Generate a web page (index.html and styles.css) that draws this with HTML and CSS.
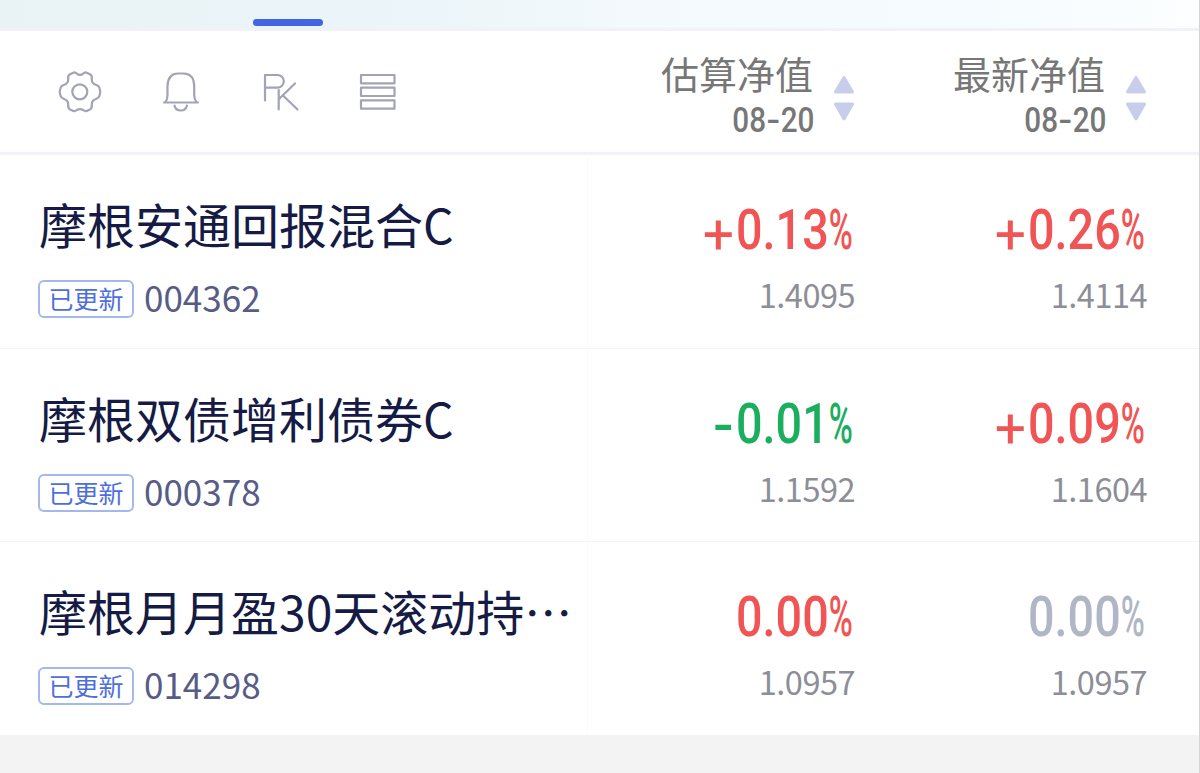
FILE: index.html
```html
<!DOCTYPE html>
<html lang="zh-CN">
<head>
<meta charset="utf-8">
<title>基金自选</title>
<link rel="stylesheet" href="styles.css">
</head>
<body>
<div class="page">
  <div class="tabs"><span class="tab-line"></span></div>
  <header class="head">
    <nav class="tools">
      <svg class="icon" width="46" height="46" viewBox="0 0 46 46"><path d="M16.8 3.5 Q18.6 3.200 19.8 4.6 Q23 7.2 26.2 4.6 Q27.4 3.200 29.2 3.5 L33 5.3 Q35.2 6.4 34.8 9.6 Q34.3 14.8 39.4 16 Q42 16.7 42.6 19.3 Q44 23 42.6 26.4 Q42 28.9 39.4 29.8 Q34.3 31.4 34.8 36.4 Q35 39.4 33 40.4 L29.6 42 Q27.8 42.5 26.2 41 Q23 39.2 19.8 41 Q18.2 42.5 16.4 42 L13 40.4 Q11 39.4 11.2 36.4 Q11.7 31.4 6.6 29.8 Q4 28.9 3.4 26.4 Q2 23 3.4 19.3 Q4 16.7 6.6 16 Q11.7 14.8 11.2 9.6 Q10.8 6.4 13 5.3 Z"/><circle cx="22.800" cy="22.800" r="7.500"/></svg>
      <svg class="icon" width="46" height="46" viewBox="0 0 46 46"><path d="M8 33.500 H42 M9.500 33 Q11.500 30.500 11.500 26 V17 Q12 4.500 22 4.500 H28 Q38 5 38.200 17 V26 Q38.200 30.500 40.500 33"/><path d="M18.500 36.500 Q19.500 41.500 24.700 41.500 Q29.900 41.500 31 36.500"/></svg>
      <svg class="icon" width="46" height="46" viewBox="0 0 46 46"><path d="M10 31.500 V6 H22.500 A6.300 6.300 0 0 1 22.500 18.600 H10.500 M23.700 21 V40.500 M40 14.500 L24 30 M28 26.500 L42.500 40.500"/></svg>
      <svg class="icon" width="46" height="46" viewBox="0 0 46 46"><path d="M7 6 H40.500 V14.300 H7 Z M7 18.700 H40.500 V27 H7 Z M7 31.400 H40.500 V39.700 H7 Z"/></svg>
    </nav>
    <div class="sortcol">
      <div class="labels"><div class="label">估算净值</div><div class="date">08<span class="dash">-</span>20</div></div>
      <svg class="arrows" width="22" height="48" viewBox="0 0 22 48"><path d="M11 3.500 L19.500 18 H2.500 Z M2.500 30 H19.500 L11 45 Z"/></svg>
    </div>
    <div class="sortcol">
      <div class="labels"><div class="label">最新净值</div><div class="date">08<span class="dash">-</span>20</div></div>
      <svg class="arrows" width="22" height="48" viewBox="0 0 22 48"><path d="M11 3.500 L19.500 18 H2.500 Z M2.500 30 H19.500 L11 45 Z"/></svg>
    </div>
  </header>
  <main>
    <section class="row">
      <div class="fund"><div class="name">摩根安通回报混合C</div><div class="meta"><span class="tag">已更新</span><span class="code">004362</span></div></div>
      <div class="value"><div class="rate up"><span class="plus">+</span>0.13<span class="pct">%</span></div><div class="nav">1.4095</div></div>
      <div class="value"><div class="rate up"><span class="plus">+</span>0.26<span class="pct">%</span></div><div class="nav">1.4114</div></div>
    </section>
    <section class="row">
      <div class="fund"><div class="name">摩根双债增利债券C</div><div class="meta"><span class="tag">已更新</span><span class="code">000378</span></div></div>
      <div class="value"><div class="rate down"><span class="minus">-</span>0.01<span class="pct">%</span></div><div class="nav">1.1592</div></div>
      <div class="value"><div class="rate up"><span class="plus">+</span>0.09<span class="pct">%</span></div><div class="nav">1.1604</div></div>
    </section>
    <section class="row">
      <div class="fund"><div class="name">摩根月月盈30天滚动持…</div><div class="meta"><span class="tag">已更新</span><span class="code">014298</span></div></div>
      <div class="value"><div class="rate up">0.00<span class="pct">%</span></div><div class="nav">1.0957</div></div>
      <div class="value"><div class="rate flat">0.00<span class="pct">%</span></div><div class="nav">1.0957</div></div>
    </section>
  </main>
</div>
</body>
</html>
```
FILE: styles.css
```css
* { box-sizing: border-box; }
body {
  margin: 0;
  background: #f3f3f3;
  font-family: "Noto Sans CJK SC", sans-serif;
}
.page {
  width: 1200px;
  height: 773px;
  overflow: hidden;
  border-right: 1px solid #d4d5d8;
}
.tabs {
  display: flex;
  align-items: flex-end;
  height: 31px;
  padding: 0 0 2px 253px;
  border-bottom: 3px solid #f0f2f7;
  background: linear-gradient(90deg, #e9f3f6 0, #ecf5f9 36%, #f3f9fd 52%, #f5fbfe 80%, #fcfeff 100%);
}
.tab-line {
  width: 70px;
  height: 7px;
  border-radius: 3.5px;
  background: #4165e3;
}
.head {
  display: grid;
  grid-template-columns: 563px 292px 292px;
  height: 124px;
  border-bottom: 3px solid #f1f3f8;
  background: #fff;
}
.tools {
  display: flex;
  gap: 53px;
  padding: 38px 0 0 57px;
}
.icon {
  fill: none;
  stroke: #a2a3b5;
  stroke-width: 2.2;
  stroke-linejoin: round;
  stroke-linecap: round;
}
.sortcol {
  display: flex;
  justify-content: flex-end;
  gap: 19px;
}
.labels {
  display: flex;
  flex-direction: column;
  align-items: flex-end;
  padding-top: 19px;
}
.label {
  margin-right: 1px;
  font-size: 38px;
  line-height: 46px;
  color: #777;
}
.date {
  margin-top: 3px;
  font: 500 34.500px/42px Roboto, sans-serif;
  color: #777;
  transform: scaleX(.86);
  transform-origin: right;
}
.dash {
  display: inline-block;
  width: 17px;
  text-align: center;
  transform: scaleX(1.35);
}
.arrows {
  margin-top: 43px;
  fill: #c8cdec;
  stroke: #c8cdec;
  stroke-width: 3;
  stroke-linejoin: round;
}
.row {
  display: grid;
  grid-template-columns: 588px 267px 292px;
  height: 193.500px;
  padding-right: 52px;
  border-bottom: 1px solid #f5f5f7;
  background: #fff;
}
.row:last-child {
  height: 193px;
  border-bottom: 0;
}
.fund {
  padding: 33px 0 0 38px;
  border-right: 1px solid #fbfbfc;
}
.name {
  padding-left: 1px;
  font-size: 48px;
  line-height: 70px;
  color: #151b44;
  white-space: nowrap;
}
.meta {
  display: flex;
  align-items: flex-start;
  gap: 10px;
  height: 38px;
  margin-top: 22px;
}
.tag {
  width: 96px;
  height: 38px;
  border: 2px solid #a3b9ee;
  border-radius: 6px;
  font-size: 25px;
  line-height: 33px;
  text-align: center;
  color: #4d6fde;
}
.code {
  font-size: 35px;
  line-height: 33px;
  color: #575c86;
}
.value {
  display: flex;
  flex-direction: column;
  align-items: flex-end;
  padding-top: 43px;
}
.rate {
  font: 500 55px/64px Roboto, sans-serif;
  white-space: nowrap;
  transform: scaleX(.85);
  transform-origin: right;
}
.pct {
  display: inline-block;
  width: 31px;
  font-weight: 500;
  transform: scaleX(.7);
  transform-origin: left;
}
.plus {
  display: inline-block;
  width: 39px;
  font-weight: 400;
  transform: translateY(5px) scaleX(1.180);
  transform-origin: left;
}
.minus {
  display: inline-block;
  width: 27px;
  transform: translateY(1px) scaleX(1.3);
  transform-origin: left;
}
.up { color: #f15454; }
.down { color: #1bae5f; }
.flat { color: #b0b6c5; }
.nav {
  margin-top: 10px;
  font-size: 32.500px;
  letter-spacing: -0.500px;
  line-height: 44px;
  color: #8c8e98;
}
```
